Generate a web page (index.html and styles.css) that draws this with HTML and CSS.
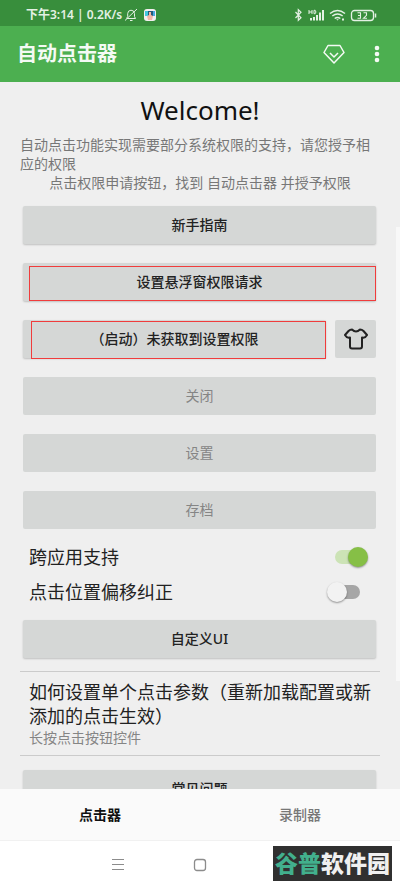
FILE: index.html
```html
<!DOCTYPE html>
<html lang="zh-CN">
<head>
<meta charset="utf-8">
<meta name="viewport" content="width=device-width, initial-scale=1">
<title>自动点击器</title>
<link rel="stylesheet" href="styles.css">
</head>
<body>
<div class="status">
  <span class="status-text">下午3:14 | 0.2K/s</span>
  <svg class="mute" width="14" height="14" viewBox="0 0 14 14" fill="none" stroke="currentColor"><path d="M3 10.500h8.500L10.500 8.500V5.500A3.500 3.500 0 0 0 7 2.200 3.500 3.500 0 0 0 3.700 5.500V8.500L2.500 10.500M6 12.500h2.500M1 12.500L13 1"/></svg>
  <svg class="app" width="12" height="12" viewBox="0 0 12 12"><rect width="12" height="12" rx="3" fill="#f4eef0"/><path d="M1 2h10v5H1z" fill="#245b7b"/><path d="M1 2h3v5H1z" fill="#42c7dd"/><path d="M9 2h2v5H9z" fill="#49a9e0"/><path d="M5 3h2v3l2 1-1 4H4L3 7l2-1z" fill="#f4b5a5"/></svg>
  <span class="grow"></span>
  <svg width="84" height="14" viewBox="0 0 84 14" fill="none" stroke="currentColor">
    <path d="M1.500 4L7 9.800 4.300 12.300V1.700L7 4.200 1.500 10" stroke-width="1.200"/>
    <g fill="currentColor" stroke="none"><path d="M16 10h2v2.500h-2zM19 9h2v3.500h-2zM22 7h2v5.500h-2zM25 4.500h2v8h-2zM28 2h2v10.500h-2z"/></g>
    <path d="M15 2v4M18 2v4M15 4h3M20 2.300v3.400h1.200q1.500-1.700 0-3.400z"/>
    <path d="M36 5.500q7.500-6 15 0M38.300 8q5.200-4.200 10.400 0M40.700 10.500q2.800-2 5.600 0" stroke-width="1.500"/><path d="M42.200 11.200l1.300 1.300 1.300-1.300zM48 10.500h2v2h-2z" fill="currentColor" stroke="none"/>
    <rect x="57.500" y="2.500" width="22" height="10" rx="3" stroke-width="1.300"/><path d="M81.500 5.500v4" stroke-width="1.500"/>
    <path d="M63.500 4.700h3v5.600h-3M64 7.500h2.500M69.500 4.700h3v2.600l-3 3h3.500" stroke-width="1.100"/>
  </svg>
</div>
<header class="appbar">
  <h1>自动点击器</h1>
  <button class="icon-btn" aria-label="会员"><svg width="22" height="20" viewBox="0 0 22 20" fill="none" stroke="currentColor" stroke-width="1.500" stroke-linejoin="round"><path d="M5 1.500h12l4 7L11 19 1 8.500z"/><path d="M7 9l4 4 4-4"/></svg></button>
  <button class="icon-btn" aria-label="更多"><svg width="6" height="18" viewBox="0 0 6 18" fill="currentColor"><circle cx="3" cy="3" r="2.300"/><circle cx="3" cy="9" r="2.300"/><circle cx="3" cy="15" r="2.300"/></svg></button>
</header>
<main>
  <h2>Welcome!</h2>
  <div class="intro">
    <p>自动点击功能实现需要部分系统权限的支持，请您授予相应的权限</p>
    <p class="center">点击权限申请按钮，找到 自动点击器 并授予权限</p>
  </div>
  <div class="actions">
    <button class="btn">新手指南</button>
    <div class="marked mark-a"><button class="btn">设置悬浮窗权限请求</button></div>
    <div class="pair">
      <div class="marked mark-b"><button class="btn">（启动）未获取到设置权限</button></div>
      <button class="btn shirt" aria-label="皮肤"><svg width="24" height="22" viewBox="0 0 24 22" fill="none" stroke="currentColor" stroke-width="2" stroke-linejoin="round"><path d="M8 1.500Q12 5.500 16 1.500Q18 1.500 19.500 3L23 7Q21 10.500 18 9.500V18.500Q18 20.500 16 20.500H8Q6 20.500 6 18.500V9.500Q3 10.500 1 7L4.500 3Q6 1.500 8 1.500z"/></svg></button>
    </div>
    <button class="btn" disabled>关闭</button>
    <button class="btn" disabled>设置</button>
    <button class="btn" disabled>存档</button>
  </div>
  <div class="options">
    <label>跨应用支持<input type="checkbox" role="switch" checked></label>
    <label>点击位置偏移纠正<input type="checkbox" role="switch"></label>
  </div>
  <button class="btn">自定义UI</button>
  <section class="tip">
    <h3>如何设置单个点击参数（重新加载配置或新添加的点击生效）</h3>
    <p>长按点击按钮控件</p>
  </section>
  <button class="btn">常见问题</button>
  <div class="scrollbar"></div>
</main>
<nav class="tabs">
  <a href="#clicker" class="active">点击器</a>
  <a href="#recorder">录制器</a>
</nav>
<footer class="system">
  <button aria-label="最近任务"><svg width="12" height="12" viewBox="0 0 12 12" stroke="currentColor"><path d="M0 .5h12M0 5.500h12M0 10.500h12"/></svg></button>
  <button aria-label="主屏幕"><svg width="14" height="14" viewBox="0 0 14 14" fill="none" stroke="currentColor" stroke-width="1.300"><rect x="1.500" y="1.500" width="11" height="11" rx="2.500"/></svg></button>
  <span></span>
</footer>
<div class="watermark"><b>谷普</b>软件园</div>
</body>
</html>
```

FILE: styles.css
```css
* { box-sizing: border-box; }
body {
  margin: 0;
  height: 100vh;
  display: flex;
  flex-direction: column;
  position: relative;
  background: #efefef;
  color: #222;
  font-family: "Noto Sans", "Noto Sans CJK SC", sans-serif;
}
h1, h2, h3, p { margin: 0; }
button { border: 0; padding: 0; background: none; font: inherit; color: inherit; }
svg { display: block; }
.status {
  flex: none;
  height: 26px;
  display: flex;
  align-items: center;
  padding: 4px 22px 0 26px;
  background: #388e3c;
  color: #e4f1e4;
}
.status-text { font-size: 12px; font-weight: 600; line-height: 16px; white-space: nowrap; }
.mute { margin-left: 2px; }
.app { margin-left: 6px; }
.grow { flex: 1; }
.appbar {
  flex: none;
  height: 56px;
  display: flex;
  align-items: center;
  gap: 29px;
  padding: 0 20px 0 17px;
  background: #4caf50;
  color: #f4faf4;
}
.appbar h1 { flex: 1; font-size: 20px; font-weight: 700; line-height: 28px; }
main {
  flex: 1;
  min-height: 0;
  overflow: hidden;
  position: relative;
  padding: 10px 20px 0;
}
h2 { font-size: 26px; font-weight: 400; line-height: 36px; text-align: center; color: #111; }
.intro { margin-top: 7px; font-size: 14px; line-height: 19px; color: #777; }
.center { text-align: center; }
.btn {
  display: block;
  width: calc(100% - 7px);
  height: 38px;
  margin: 0 4px 0 3px;
  border-radius: 2px;
  background: #d5d7d6;
  box-shadow: 0 1px 2px rgba(0, 0, 0, .2);
  font-size: 14px;
  font-weight: 500;
  line-height: 20px;
  color: #222;
}
.btn:disabled { color: #858585; box-shadow: none; font-weight: 400; }
.actions { margin-top: 14px; display: flex; flex-direction: column; gap: 19px; }
.pair { display: flex; padding-right: 4px; }
.marked { position: relative; }
.pair .marked { flex: 1; }
.pair .shirt { flex: none; width: 41px; margin: 0 0 0 5px; display: grid; place-items: center; box-shadow: none; }
.marked::after { content: ""; position: absolute; border: 1px solid #f03c3c; pointer-events: none; }
.mark-a::after { inset: 3px 4px 0 9px; }
.mark-b::after { inset: 1px 4px -1px 11px; }
.options { margin: 10px 0 11px; padding: 0 9px; font-size: 18px; line-height: 24px; }
.options label { display: flex; align-items: center; justify-content: space-between; height: 35px; }
input {
  appearance: none;
  position: relative;
  width: 26px;
  height: 14px;
  margin: 0 11px 0 0;
  border-radius: 7px;
  background: linear-gradient(#a6a6a6, #a6a6a6) right / 22px 14px no-repeat;
}
input::after {
  content: "";
  position: absolute;
  top: -3px;
  left: -7px;
  width: 20px;
  height: 20px;
  border-radius: 50%;
  background: #f2f2f2;
  box-shadow: 0 1px 2px rgba(0, 0, 0, .4);
}
input:checked { margin-right: 6px; width: 30px; background: #cce3b6; }
input:checked::after { left: auto; right: -3px; background: #86bf46; }
.tip { margin: 13px 0 14px; padding: 8px 3px 7px 9px; border: solid #cbcbcb; border-width: 1px 0; }
.tip h3 { font-size: 18px; font-weight: 400; line-height: 24px; }
.tip p { font-size: 14px; line-height: 20px; color: #858585; }
.scrollbar { position: absolute; right: 0; top: 145px; width: 4px; height: 454px; background: #f8f8f8; }
.tabs {
  flex: none;
  height: 52px;
  display: flex;
  align-items: center;
  background: #fafafa;
  border-bottom: 1px solid #f1f1f1;
}
.tabs a { flex: 1; text-align: center; text-decoration: none; font-size: 14px; font-weight: 500; line-height: 20px; color: #777; }
.tabs .active { color: #111; font-weight: 700; }
.system {
  flex: none;
  height: 48px;
  display: flex;
  align-items: center;
  justify-content: space-between;
  padding: 0 28%;
  background: #fff;
  color: #8c8c8c;
}
.system span { width: 12px; }
.watermark {
  position: absolute;
  right: 8px;
  bottom: 8px;
  height: 35px;
  padding: 0 2px;
  background: #303030;
  color: #f0f0f0;
  font-size: 23px;
  font-weight: 900;
  line-height: 34px;
  white-space: nowrap;
}
.watermark b { color: #42b08d; font-weight: 900; }
```
